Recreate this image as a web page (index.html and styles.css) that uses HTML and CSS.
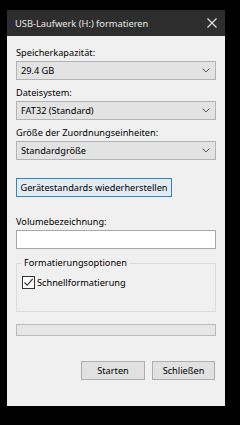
FILE: index.html
```html
<!DOCTYPE html>
<html>
<head>
  <title>USB-Laufwerk (H:) formatieren</title>
  <link rel="stylesheet" href="styles.css">
</head>
<body>
  <div class="window">
    <div class="titlebar">
      <span class="title">USB-Laufwerk (H:) formatieren</span>
      <svg class="close" width="10" height="10" viewBox="0 0 10 10">
        <path d="M0.5 0.5 L9.5 9.5 M9.5 0.5 L0.5 9.5" stroke="#e8e8e8" stroke-width="1.1" fill="none"/>
      </svg>
    </div>

    <div class="content">
      <div class="field">
        <div class="label">Speicherkapazität:</div>
        <div class="combo">
          <span>29.4 GB</span>
          <svg class="chevron" width="8" height="5" viewBox="0 0 8 5"><path d="M0.5 0.5 L4 4 L7.5 0.5" stroke="#5a5a5a" fill="none"/></svg>
        </div>
      </div>

      <div class="field">
        <div class="label">Dateisystem:</div>
        <div class="combo">
          <span>FAT32 (Standard)</span>
          <svg class="chevron" width="8" height="5" viewBox="0 0 8 5"><path d="M0.5 0.5 L4 4 L7.5 0.5" stroke="#5a5a5a" fill="none"/></svg>
        </div>
      </div>

      <div class="field">
        <div class="label">Größe der Zuordnungseinheiten:</div>
        <div class="combo">
          <span>Standardgröße</span>
          <svg class="chevron" width="8" height="5" viewBox="0 0 8 5"><path d="M0.5 0.5 L4 4 L7.5 0.5" stroke="#5a5a5a" fill="none"/></svg>
        </div>
      </div>

      <button class="btn restore">Gerätestandards wiederherstellen</button>

      <div class="field volume">
        <div class="label">Volumebezeichnung:</div>
        <div class="textbox"></div>
      </div>

      <fieldset class="options">
        <legend>Formatierungsoptionen</legend>
        <div class="check">
          <span class="box">
            <svg width="11" height="11" viewBox="0 0 11 11"><path d="M1.5 5.5 L4.2 8.3 L9.6 1.8" stroke="#222" stroke-width="1.1" fill="none"/></svg>
          </span>
          <span>Schnellformatierung</span>
        </div>
      </fieldset>

      <div class="progress"></div>

      <div class="actions">
        <button class="btn start">Starten</button>
        <button class="btn close-btn">Schließen</button>
      </div>
    </div>
  </div>
</body>
</html>
```

FILE: styles.css
```css
body {
  margin: 0;
  background: #000;
  font-family: "Noto Sans", "Open Sans", Arial, sans-serif;
  font-size: 9.2px;
  color: #000;
  width: 240px;
  height: 425px;
  overflow: hidden;
}
.window {
  margin: 10px 0 0 7px;
  width: 218px;
  height: 396px;
  background: #f0f0f0;
  display: flex;
  flex-direction: column;
}
.titlebar {
  height: 26px;
  background: #2d2d2d;
  display: flex;
  align-items: center;
  justify-content: space-between;
  padding: 0 8px 0 8px;
}
.title {
  color: #e8e8e8;
  font-size: 9.3px;
}
.content {
  flex: 1;
  padding: 9px 9px 0 9px;
  display: flex;
  flex-direction: column;
}
.field {
  margin-bottom: 5px;
}
.label {
  height: 16px;
  line-height: 16px;
}
.combo {
  height: 19px;
  box-sizing: border-box;
  background: #e3e3e3;
  border: 1px solid #b3b3b3;
  display: flex;
  align-items: center;
  justify-content: space-between;
  padding: 0 5px 0 4px;
}
.btn {
  font-family: inherit;
  font-size: 9.2px;
  color: #000;
  height: 19px;
  padding: 0;
  background: #e1e1e1;
  border: 1px solid #adadad;
  border-radius: 0;
}
.restore {
  margin-top: 13px;
  align-self: flex-start;
  width: 156px;
  background: #e3ebf2;
  border-color: #2f86d0;
}
.volume {
  margin-top: 17px;
  margin-bottom: 0;
}
.textbox {
  height: 19px;
  box-sizing: border-box;
  background: #fff;
  border: 1px solid #a8a8a8;
}
.options {
  margin: 7px 0 0 0;
  padding: 0 5px 22px 5px;
  border: 1px solid #dcdcdc;
  min-width: 0;
}
.options legend {
  padding: 0 2px;
  line-height: 14px;
}
.check {
  margin-top: 6px;
  display: flex;
  align-items: center;
  gap: 2px;
  line-height: 13px;
}
.box {
  width: 13px;
  height: 13px;
  box-sizing: border-box;
  border: 1px solid #333;
  background: #fff;
  display: flex;
  align-items: center;
  justify-content: center;
}
.progress {
  margin-top: 12px;
  height: 12px;
  box-sizing: border-box;
  background: #e6e6e6;
  border: 1px solid #bcbcbc;
}
.actions {
  margin-top: 25px;
  display: flex;
  justify-content: flex-end;
  gap: 7px;
  padding-right: 1px;
}
.start {
  width: 64px;
}
.close-btn {
  width: 63px;
}
```
